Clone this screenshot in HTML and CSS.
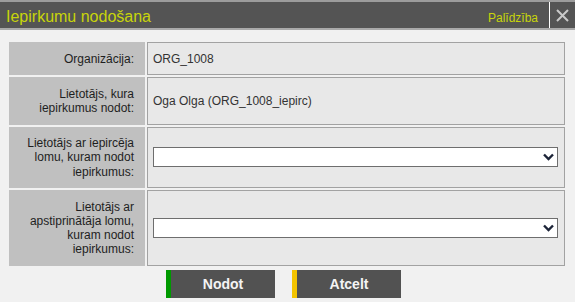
FILE: index.html
```html
<!DOCTYPE html>
<html lang="lv">
<head>
    <meta charset="UTF-8">
    <title>Iepirkumu nodošana</title>
    <link rel="stylesheet" href="styles.css">
</head>
<body>

<div class="titlebar">
    <span class="title">Iepirkumu nodošana</span>
    <a class="help" href="#">Palīdzība</a>
    <span class="close">
        <svg width="13" height="13" viewBox="0 0 13 13">
            <path d="M1 1 L12 12 M12 1 L1 12" stroke="#c9c9c9" stroke-width="2" fill="none"/>
        </svg>
    </span>
</div>

<div class="form">
    <div class="label">Organizācija:</div>
    <div class="value">ORG_1008</div>

    <div class="label">Lietotājs, kura iepirkumus nodot:</div>
    <div class="value">Oga Olga (ORG_1008_iepirc)</div>

    <div class="label">Lietotājs ar iepircēja lomu, kuram nodot iepirkumus:</div>
    <div class="value">
        <div class="select-wrap">
            <select class="select"><option></option></select>
            <svg class="chevron" width="11" height="8" viewBox="0 0 11 8">
                <path d="M1 1.5 L5.5 6 L10 1.5" stroke="#1c2438" stroke-width="2.4" fill="none"/>
            </svg>
        </div>
    </div>

    <div class="label">Lietotājs ar apstiprinātāja lomu, kuram nodot iepirkumus:</div>
    <div class="value">
        <div class="select-wrap">
            <select class="select"><option></option></select>
            <svg class="chevron" width="11" height="8" viewBox="0 0 11 8">
                <path d="M1 1.5 L5.5 6 L10 1.5" stroke="#1c2438" stroke-width="2.4" fill="none"/>
            </svg>
        </div>
    </div>
</div>

<div class="actions">
    <button class="button ok">Nodot</button>
    <button class="button cancel">Atcelt</button>
</div>

</body>
</html>
```

FILE: styles.css
```css
/* General */
body {
    margin: 0;
    background-color: #f1f1f1;
    font-family: "Liberation Sans", Arial, sans-serif;
    font-size: 12px;
    color: #222;
}

/* Title bar */
.titlebar {
    display: flex;
    align-items: baseline;
    height: 26px;
    background-color: #545454;
    border-top: 2px solid #9c9c9c;
    border-bottom: 2px solid #a9a9a9;
}

.title {
    padding: 3px 0 0 6px;
    line-height: 23px;
    font-size: 16px;
    color: #c8d40a;
}

.help {
    margin-left: auto;
    padding-right: 11px;
    font-size: 12px;
    color: #c8d40a;
    text-decoration: none;
}

.close {
    align-self: stretch;
    width: 25px;
    border-left: 1px solid #ffffff;
    display: flex;
    justify-content: center;
    align-items: center;
}

/* Form grid */
.form {
    display: grid;
    grid-template-columns: 136px 1fr;
    gap: 2px;
    margin: 12px 10px 0 9px;
}

.label {
    background-color: #c0c0c0;
    padding: 9.5px 11px 9.5px 6px;
    line-height: 14.2px;
    text-align: right;
    color: #1e1e1e;
}

.value {
    background-color: #e8e8e8;
    border: 1px solid #a2a2a2;
    padding: 0 6px 0 5px;
    display: flex;
    align-items: center;
    color: #333;
}

.select-wrap {
    position: relative;
    flex: 1;
    display: flex;
}

.select {
    flex: 1;
    height: 20px;
    margin: 0;
    border: 1px solid #6e6e6e;
    border-radius: 0;
    background-color: #ffffff;
    appearance: none;
    -webkit-appearance: none;
    font-family: inherit;
    font-size: 12px;
}

.chevron {
    position: absolute;
    right: 4px;
    top: 6px;
    pointer-events: none;
}

/* Buttons */
.actions {
    display: flex;
    justify-content: center;
    gap: 17px;
    margin-top: 4px;
    padding-right: 8px;
}

.button {
    width: 109px;
    height: 28px;
    padding: 0;
    border: none;
    border-left: 5px solid #009a00;
    background-color: #525252;
    color: #f4f4f4;
    font-family: inherit;
    font-size: 14px;
    font-weight: bold;
    cursor: pointer;
}

.button.cancel {
    border-left-color: #f4c400;
}
```
